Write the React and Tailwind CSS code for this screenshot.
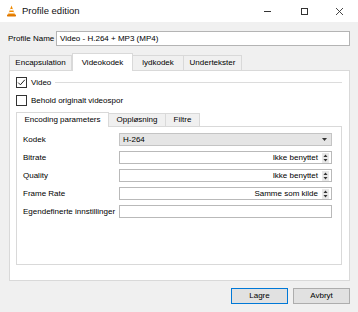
import React from 'react';

const font = { fontFamily: '"Liberation Sans", Arial, sans-serif' };

const VlcIcon = () => (
  <svg width="11" height="12" viewBox="0 0 11 12">
    <path d="M5.5 0.5 L9 10 L2 10 Z" fill="#f08a00" />
    <path d="M4.3 4 L6.7 4 L7.3 5.6 L3.7 5.6 Z" fill="#ffffff" />
    <path d="M3.3 7 L7.7 7 L8.2 8.4 L2.8 8.4 Z" fill="#ffffff" />
    <rect x="1" y="9.6" width="9" height="1.8" rx="0.6" fill="#e07800" />
  </svg>
);

const Checkbox = ({ checked }) => (
  <div className="w-[11px] h-[11px] border border-[#333333] bg-white flex items-center justify-center shrink-0">
    {checked && (
      <svg width="9" height="9" viewBox="0 0 9 9">
        <path d="M1.2 4.6 L3.4 6.8 L7.8 1.8" fill="none" stroke="#222" strokeWidth="1" />
      </svg>
    )}
  </div>
);

const Spin = () => (
  <svg width="7" height="10" viewBox="0 0 7 10" className="shrink-0">
    <rect x="0" y="0" width="7" height="10" fill="#e8e8e8" />
    <path d="M1.5 4 L3.5 1.5 L5.5 4 Z" fill="#333" />
    <path d="M1.5 6 L3.5 8.5 L5.5 6 Z" fill="#333" />
  </svg>
);

const SpinField = ({ value }) => (
  <div className="flex-1 h-[13px] border border-[#b9b9b9] bg-white flex items-center justify-end pr-[2px] gap-[4px]">
    <span className="text-[8px] leading-none">{value}</span>
    <Spin />
  </div>
);

const Row = ({ label, children }) => (
  <div className="flex items-center h-[13px]">
    <span className="w-[96px] shrink-0 text-[8px] leading-none">{label}</span>
    {children}
  </div>
);

export default function App() {
  const tabs = ['Encapsulation', 'Videokodek', 'lydkodek', 'Undertekster'];
  const tabW = ['w-[63px]', 'w-[61px]', 'w-[51px]', 'w-[58px]'];
  const inner = ['Encoding parameters', 'Oppløsning', 'Filtre'];
  const innerW = ['w-[93px]', 'w-[57px]', 'w-[34px]'];

  return (
    <div className="w-[358px] h-[312px] bg-[#f0f0f0] flex flex-col text-black overflow-hidden" style={font}>
      {/* title bar */}
      <div className="h-[22px] bg-white flex items-center pl-[6px]">
        <VlcIcon />
        <span className="ml-[5px] text-[9.5px] text-[#111]">Profile edition</span>
        <div className="ml-auto flex items-center h-full">
          <div className="w-[38px] flex justify-center">
            <div className="w-[7px] h-px bg-[#333]" />
          </div>
          <div className="w-[36px] flex justify-center">
            <div className="w-[7px] h-[7px] border border-[#333]" />
          </div>
          <div className="w-[36px] flex justify-center pr-[2px]">
            <svg width="7" height="7" viewBox="0 0 7 7">
              <path d="M0 0 L7 7 M7 0 L0 7" stroke="#333" strokeWidth="0.9" />
            </svg>
          </div>
        </div>
      </div>

      <div className="flex flex-col pl-[9px] pr-[8px]">
        {/* profile name */}
        <div className="flex items-center mt-[9px] h-[15px]">
          <span className="w-[48px] -ml-px text-[8px] leading-none">Profile Name</span>
          <div className="flex-1 h-[15px] border border-[#b4b4b4] bg-white flex items-center pl-[3px] text-[8px] leading-none">
            Video - H.264 + MP3 (MP4)
          </div>
        </div>

        {/* tabs */}
        <div className="flex items-end h-[17px] mt-[7px]">
          {tabs.map((t, i) =>
            i === 1 ? (
              <div key={t} className={`${tabW[i]} h-[18px] -mb-px bg-white border border-b-0 border-[#d9d9d9] flex items-center justify-center text-[8px] leading-none relative z-10`}>
                {t}
              </div>
            ) : (
              <div key={t} className={`${tabW[i]} h-[15px] bg-[#f0f0f0] border border-b-0 border-[#d9d9d9] ${i === 0 ? '' : 'border-l-0'} flex items-center justify-center text-[8px] leading-none`}>
                {t}
              </div>
            )
          )}
        </div>

        {/* pane */}
        <div className="h-[211px] bg-white border border-[#d9d9d9] flex flex-col pl-[6px] pr-[7px]">
          <div className="flex items-center mt-[6px] h-[11px]">
            <Checkbox checked />
            <span className="ml-[4px] text-[8px] leading-none">Video</span>
            <div className="flex-1 h-px bg-[#dcdcdc] ml-[4px]" />
          </div>
          <div className="flex items-center mt-[7px] h-[11px]">
            <Checkbox />
            <span className="ml-[4px] text-[8px] leading-none">Behold originalt videospor</span>
          </div>

          {/* inner tabs */}
          <div className="flex items-end h-[15px] mt-[5px]">
            {inner.map((t, i) =>
              i === 0 ? (
                <div key={t} className={`${innerW[i]} h-[15px] -mb-px bg-white border border-b-0 border-[#d9d9d9] flex items-center justify-center text-[8px] leading-none relative z-10`}>
                  {t}
                </div>
              ) : (
                <div key={t} className={`${innerW[i]} h-[13px] bg-[#f0f0f0] border border-b-0 border-l-0 border-[#d9d9d9] flex items-center justify-center text-[8px] leading-none`}>
                  {t}
                </div>
              )
            )}
          </div>
          <div className="h-[139px] bg-white border border-[#d9d9d9] flex flex-col pl-[6px] pr-[9px] pt-[6px] gap-[5px]">
            <Row label="Kodek">
              <div className="flex-1 h-[13px] border border-[#c4c4c4] bg-[#e5e5e5] flex items-center pl-[3px] pr-[4px] text-[8px] leading-none">
                H-264
                <svg width="5" height="3" viewBox="0 0 5 3" className="ml-auto">
                  <path d="M0 0 L5 0 L2.5 3 Z" fill="#333" />
                </svg>
              </div>
            </Row>
            <Row label="Bitrate">
              <SpinField value="Ikke benyttet" />
            </Row>
            <Row label="Quality">
              <SpinField value="Ikke benyttet" />
            </Row>
            <Row label="Frame Rate">
              <SpinField value="Samme som kilde" />
            </Row>
            <Row label="Egendefinerte innstillinger">
              <div className="flex-1 h-[13px] border border-[#b9b9b9] bg-white" />
            </Row>
          </div>
        </div>

        {/* buttons */}
        <div className="flex justify-end gap-[5px] mt-[7px]">
          <div className="w-[57px] h-[16px] bg-[#e1e1e1] border border-[#0078d7] flex items-center justify-center text-[8px] leading-none">
            Lagre
          </div>
          <div className="w-[57px] h-[16px] bg-[#e1e1e1] border border-[#adadad] flex items-center justify-center text-[8px] leading-none">
            Avbryt
          </div>
        </div>
      </div>
    </div>
  );
}
